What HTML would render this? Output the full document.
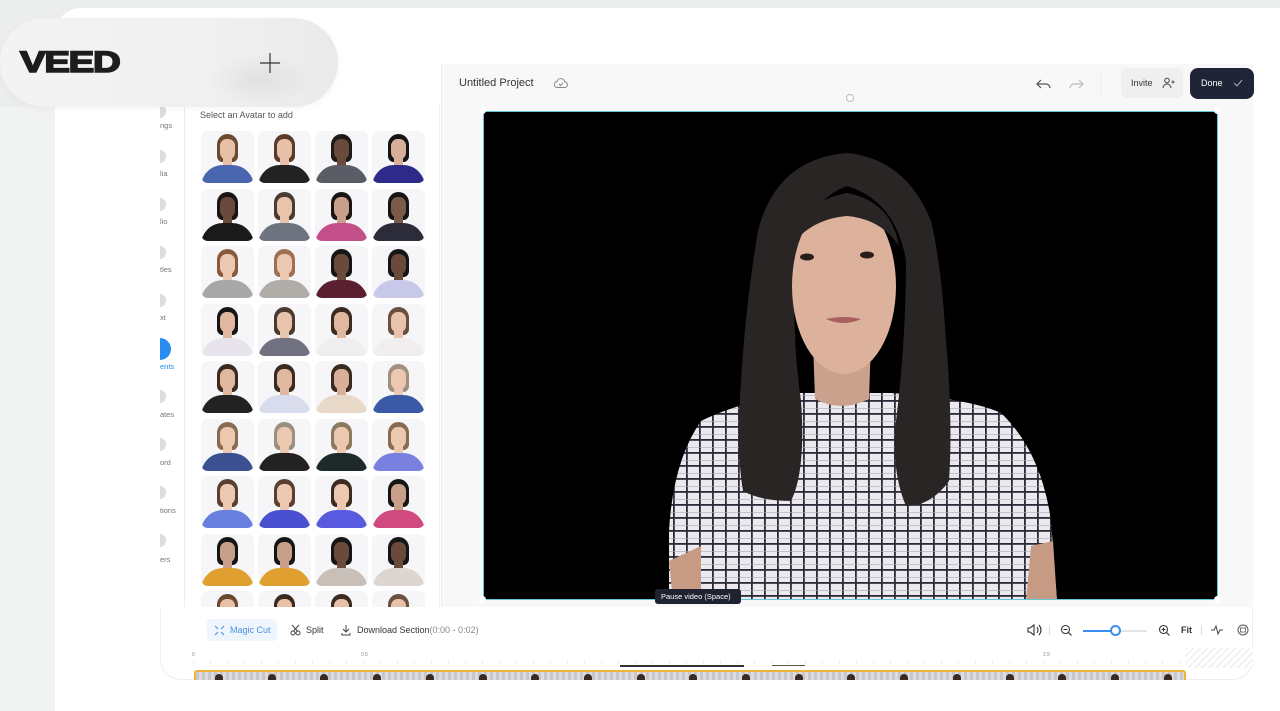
<!DOCTYPE html>
<html><head><meta charset="utf-8"><style>
*{margin:0;padding:0;box-sizing:border-box}
html,body{width:1280px;height:711px;overflow:hidden}
body{background:#eceeed;font-family:"Liberation Sans",sans-serif;position:relative}
.abs{position:absolute}
.card{left:55px;top:8px;width:1225px;height:703px;background:#fff;border-top-left-radius:26px}
.pill{left:0;top:18px;width:338px;height:89px;border-radius:45px;background:linear-gradient(90deg,#f3f3f3,#f0f0f0 60%,#eaeaea);box-shadow:0 2px 8px rgba(0,0,0,.04)}
.logo{left:20px;top:46px;font-size:30px;font-weight:900;letter-spacing:-1px;color:#1c1c1c;transform:scaleX(1.28);transform-origin:left;-webkit-text-stroke:1.6px #1c1c1c;font-family:"Liberation Sans",sans-serif}
.nav{left:160px;top:105px;width:25px;height:502px;overflow:hidden;border-right:1px solid #ececec}
.nav span{position:absolute;font-size:7.5px;color:#777;left:0}
.nav b{position:absolute;left:0;width:6px;height:13px;background:#ddd;border-radius:0 6px 6px 0}
.av{position:absolute;width:53px;height:52px;border-radius:7px;background:#f6f6f8;overflow:hidden}
.av .b{position:absolute;left:0;right:0;bottom:-12px;height:30px;border-radius:22px 22px 0 0;background:var(--s)}
.av .h{position:absolute;left:16px;top:3px;width:21px;height:var(--hl,28px);border-radius:11px 11px 6px 6px;background:var(--h)}
.av .f{position:absolute;left:19px;top:8px;width:15px;height:21px;border-radius:8px 8px 9px 9px;background:var(--k)}
.av .n{position:absolute;left:22px;top:26px;width:9px;height:8px;background:var(--k)}
.ed{left:441px;top:64px;width:812px;height:543px;background:#f8f8f8}
.video{left:483px;top:111px;width:735px;height:489px;background:#000;border:1px solid #5fc9d6;overflow:hidden}
.tb{left:160px;top:607px;width:1093px;height:73px;background:#fff;border-radius:0 0 20px 20px;border:1px solid #eee;border-top:none}
.t{position:absolute;font-size:9px;color:#333;white-space:nowrap}
</style></head><body>
<div class="abs card"></div>
<div class="abs ed"></div>
<div class="abs" style="left:441px;top:64px;width:1px;height:543px;background:#eee"></div>
<div class="abs" style="left:459px;top:77px;font-size:11px;color:#333">Untitled Project</div>
<svg class="abs" style="left:554px;top:77px" width="14" height="12" viewBox="0 0 14 12"><path d="M3.5 10.5h7a2.8 2.8 0 0 0 .3-5.6A4 4 0 0 0 3 4.5a3 3 0 0 0 .5 6z M5 7l1.5 1.5L9 6" fill="none" stroke="#888" stroke-width="1"/></svg>
<svg class="abs" style="left:1035px;top:77px" width="50" height="14" viewBox="0 0 50 14"><path d="M6 3L2 7l4 4M2 7h9a4 4 0 0 1 4 4" fill="none" stroke="#555" stroke-width="1.2"/><path d="M44 3l4 4-4 4M48 7h-9a4 4 0 0 0-4 4" fill="none" stroke="#bbb" stroke-width="1.2"/></svg>
<div class="abs" style="left:1100px;top:70px;width:1px;height:26px;background:#eee"></div>
<div class="abs" style="left:1121px;top:68px;width:62px;height:30px;background:#efefef;border-radius:6px"></div>
<div class="abs" style="left:1131px;top:78px;font-size:9px;color:#333">Invite</div>
<svg class="abs" style="left:1162px;top:77px" width="13" height="12" viewBox="0 0 13 12"><circle cx="5" cy="3.5" r="2.3" fill="none" stroke="#444" stroke-width="1"/><path d="M1 11a4 4 0 0 1 8 0" fill="none" stroke="#444" stroke-width="1"/><path d="M9.5 5h3M11 3.5v3" stroke="#444" stroke-width="1"/></svg>
<div class="abs" style="left:1190px;top:68px;width:64px;height:31px;background:#1f2437;border-radius:8px"></div>
<div class="abs" style="left:1201px;top:78px;font-size:9px;color:#fff">Done</div>
<svg class="abs" style="left:1233px;top:79px" width="10" height="8"><path d="M1 4l3 3 5-6" fill="none" stroke="#aab" stroke-width="1"/></svg>
<div class="abs" style="left:846px;top:94px;width:8px;height:8px;border-radius:50%;border:1px solid #bbb;background:#fff"></div>

<div class="abs video">
<svg width="735" height="489" viewBox="483 111 735 489" style="display:block">
<defs><pattern id="chk" width="13" height="13" patternUnits="userSpaceOnUse"><rect width="13" height="13" fill="#ebe9ee"/><rect x="0" y="9" width="13" height="1.8" fill="#2a2a38"/><rect x="9" y="0" width="1.8" height="13" fill="#2a2a38"/><rect x="0" y="4" width="13" height="0.6" fill="#aaa8b4"/></pattern></defs>
<path d="M668 600 L668 530 Q672 460 700 420 Q740 400 800 392 L890 392 Q970 398 1000 412 Q1040 450 1050 520 L1056 600Z" fill="url(#chk)"/>
<path d="M668 560 L672 600 L700 600 L700 545 Z" fill="#c79a84"/>
<path d="M1030 545 L1025 600 L1056 600 L1052 540Z" fill="#c79a84"/>
<path d="M812 340 L814 398 Q840 412 868 398 L870 340Z" fill="#c9a18c"/>
<path d="M846 152 Q775 158 757 230 Q745 300 740 380 Q735 450 742 490 Q760 500 790 500 Q805 470 800 400 Q790 330 795 260 Q805 200 846 185 Q895 200 905 260 Q905 340 895 420 Q890 470 905 505 Q930 505 948 480 Q952 420 945 340 Q940 260 930 220 Q905 158 846 152Z" fill="#2a2525"/>
<ellipse cx="843" cy="285" rx="52" ry="88" fill="#dcb29c"/>
<path d="M790 245 Q800 200 846 192 Q890 200 898 245 Q880 218 846 215 Q810 218 790 245Z" fill="#2a2525"/>
<ellipse cx="806" cy="256" rx="7" ry="3.5" fill="#2a1e1a"/><ellipse cx="866" cy="254" rx="7" ry="3.5" fill="#2a1e1a"/>
<path d="M825 318 Q843 326 860 318 Q843 314 825 318Z" fill="#a86060"/>
</svg>
</div>
<div class="abs" style="left:479px;top:107px;width:7px;height:7px;border-radius:50%;background:#fff"></div>
<div class="abs" style="left:1214px;top:107px;width:7px;height:7px;border-radius:50%;background:#fff"></div>
<div class="abs" style="left:479px;top:596px;width:7px;height:7px;border-radius:50%;background:#fff"></div>
<div class="abs" style="left:1214px;top:596px;width:7px;height:7px;border-radius:50%;background:#fff"></div>
<div class="abs" style="left:655px;top:589px;width:86px;height:15px;background:#1f2230;border-radius:3px;color:#fff;font-size:7.5px;padding:3px 0 0 6px">Pause video (Space)</div>

<div class="abs nav">
<b style="top:0"></b><span style="top:16px">ngs</span>
<b style="top:45px"></b><span style="top:64px">lia</span>
<b style="top:93px"></b><span style="top:112px">lio</span>
<b style="top:141px"></b><span style="top:160px">tles</span>
<b style="top:189px"></b><span style="top:208px">xt</span>
<b style="top:233px;background:#2a8cf0;width:11px;height:22px;border-radius:0 11px 11px 0"></b><span style="top:257px;color:#2a8cf0">ents</span>
<b style="top:285px"></b><span style="top:305px">ates</span>
<b style="top:333px"></b><span style="top:353px">ord</span>
<b style="top:381px"></b><span style="top:401px">tions</span>
<b style="top:429px"></b><span style="top:450px">ers</span>
</div>

<div class="abs" style="left:185px;top:105px;width:255px;height:502px;border-right:1px solid #eee"></div>
<div class="t abs" style="left:200px;top:110px;color:#555;font-size:9px">Select an Avatar to add</div>
<div class="abs" id="grid" style="left:185px;top:105px;width:255px;height:502px;overflow:hidden"></div>

<div class="abs tb"></div>
<div class="abs" style="left:207px;top:619px;width:70px;height:22px;background:#eef5fd;border-radius:4px"></div>
<svg class="abs" style="left:214px;top:625px" width="11" height="11"><path d="M1 1l3 3M10 1L7 4M1 10l3-3M10 10L7 7" stroke="#4a90e2" stroke-width="1"/></svg>
<div class="t" style="left:230px;top:625px;color:#4a90e2">Magic Cut</div>
<svg class="abs" style="left:290px;top:624px" width="11" height="12"><circle cx="3" cy="9" r="2" fill="none" stroke="#444"/><circle cx="8" cy="9" r="2" fill="none" stroke="#444"/><path d="M3.5 7L9 1M7.5 7L2 1" stroke="#444"/></svg>
<div class="t" style="left:306px;top:625px">Split</div>
<svg class="abs" style="left:341px;top:624px" width="10" height="12"><path d="M5 1v7M2 5l3 3 3-3M1 9v2h8V9" fill="none" stroke="#444"/></svg>
<div class="t" style="left:357px;top:625px">Download Section<span style="color:#888">(0:00 - 0:02)</span></div>
<svg class="abs" style="left:1026px;top:623px" width="16" height="14"><path d="M2 5h2l4-3v10L4 9H2z M11 4q2 3 0 6 M13 2q4 5 0 10" fill="none" stroke="#333" stroke-width="1.1"/></svg>
<div class="abs" style="left:1049px;top:625px;width:1px;height:10px;background:#ddd"></div>
<svg class="abs" style="left:1060px;top:624px" width="13" height="13"><circle cx="5.5" cy="5.5" r="4" fill="none" stroke="#333" stroke-width="1.1"/><path d="M3.5 5.5h4M8.5 8.5l3 3" stroke="#333" stroke-width="1.1"/></svg>
<div class="abs" style="left:1083px;top:630px;width:32px;height:2px;background:#3a8ef0"></div>
<div class="abs" style="left:1115px;top:630px;width:32px;height:2px;background:#e5e5e5"></div>
<div class="abs" style="left:1110px;top:625px;width:11px;height:11px;border-radius:50%;border:2px solid #3a8ef0;background:#fff"></div>
<svg class="abs" style="left:1158px;top:624px" width="13" height="13"><circle cx="5.5" cy="5.5" r="4" fill="none" stroke="#333" stroke-width="1.1"/><path d="M3.5 5.5h4M5.5 3.5v4M8.5 8.5l3 3" stroke="#333" stroke-width="1.1"/></svg>
<div class="t" style="left:1181px;top:625px;font-weight:bold">Fit</div>
<div class="abs" style="left:1201px;top:625px;width:1px;height:10px;background:#ddd"></div>
<svg class="abs" style="left:1211px;top:624px" width="12" height="12"><path d="M0 6h3l2-4 2 8 2-4h3" fill="none" stroke="#444"/></svg>
<svg class="abs" style="left:1237px;top:624px" width="12" height="12"><circle cx="6" cy="6" r="5" fill="none" stroke="#555"/><rect x="3.5" y="4" width="5" height="4" fill="none" stroke="#555" stroke-width=".8"/></svg>
<div class="t" style="left:192px;top:652px;font-size:5px;color:#888">0</div>
<div class="t" style="left:361px;top:652px;font-size:5px;color:#888">0.5</div>
<div class="t" style="left:1043px;top:652px;font-size:5px;color:#888">2.5</div>
<div class="t" style="left:1216px;top:652px;font-size:5px;color:#888">3</div>
<div class="abs" style="left:193px;top:662px;width:1045px;height:1px;background:repeating-linear-gradient(90deg,#ccc 0 1px,transparent 1px 17px)"></div>
<div class="abs" style="left:1185px;top:648px;width:68px;height:20px;background:repeating-linear-gradient(135deg,#f2f2f2 0 2px,#fff 2px 5px)"></div>
<div class="abs" style="left:620px;top:665px;width:124px;height:2px;background:#333"></div>
<div class="abs" style="left:772px;top:665px;width:33px;height:1px;background:#555"></div>
<div class="abs" style="left:194px;top:670px;width:992px;height:12px;border:2px solid #f0b23a;border-bottom:none;border-radius:3px 3px 0 0;background:repeating-linear-gradient(90deg,#c8c8cc 0 3px,#dcdce0 3px 6px)" id="strip"></div>
<div class="abs" style="left:55px;top:680px;width:1225px;height:31px;background:#fff"></div>
<div class="abs" style="left:0;top:107px;width:55px;height:604px;background:#f1f2f2"></div>

<div class="abs pill"></div>
<div class="abs" style="left:210px;top:55px;width:100px;height:50px;border-radius:50%;background:radial-gradient(ellipse,rgba(200,200,200,.35),transparent 70%)"></div>
<div class="abs logo">VEED</div>
<svg class="abs" style="left:260px;top:53px" width="20" height="20"><path d="M10 0v20M0 10h20" stroke="#333" stroke-width="1.2"/></svg>

<script>
var rows=[
[["#4b66b0","#6b4a30","#e8c0a8"],["#222","#5a3a28","#e8c0a8"],["#5a5c66","#1e1a18","#6a4a3a"],["#2e2a8a","#151515","#d8b09a"]],
[["#1a1a1a","#1a1414","#6a4a3a"],["#6e7380","#4a3a30","#e8c4ac"],["#c4508a","#1a1414","#c8a08a"],["#2b2b3a","#151515","#7a5a48"]],
[["#a7a7a7","#8a5a3a","#ecc8b0"],["#b0aca8","#a07050","#ecc8b0"],["#5a2030","#151515","#6a4a3a"],["#c8c8e8","#151515","#6a4a3a"]],
[["#e8e4ec","#151515","#e0b8a0"],["#707080","#4a3a30","#e8c4ac"],["#eee","#3a2a20","#e0b8a0"],["#f0eeee","#6a5040","#e8c4ac"]],
[["#222","#3a2a20","#e0b8a0"],["#d8dcec","#3a2a20","#e0b8a0"],["#e8d8c8","#3a2a20","#d8b09a"],["#3a5aa8","#a09080","#ecc8b0"]],
[["#3a5090","#8a6a50","#ecc8b0"],["#222","#9a9080","#ecc8b0"],["#1e2a2a","#8a7a60","#ecc8b0"],["#7a80e0","#8a6a50","#ecc8b0"]],
[["#6a80e0","#5a4030","#ecc8b0"],["#4a50d0","#5a4030","#ecc8b0"],["#5a5ae0","#3a2a20","#ecc8b0"],["#d04a80","#151515","#c8a08a"]],
[["#e0a030","#151515","#c8a08a"],["#e0a030","#151515","#c8a08a"],["#c8c0b8","#151515","#6a4a3a"],["#ddd6d0","#151515","#6a4a3a"]],
[["#888","#6a4a30","#e8c0a8"],["#888","#3a2a20","#e8c0a8"],["#888","#3a2a20","#e8c0a8"],["#888","#6a5040","#e8c0a8"]]];
var h="";rows.forEach(function(r,ri){r.forEach(function(c,ci){
h+='<div class="av" style="left:'+(16+ci*57)+'px;top:'+(26+ri*57.5)+'px;--s:'+c[0]+';--h:'+c[1]+';--k:'+c[2]+'"><i class="h"></i><i class="b"></i><i class="n"></i><i class="f"></i></div>';});});
document.getElementById("grid").innerHTML=h;
var s="";for(var i=0;i<19;i++){s+='<div style="position:absolute;left:'+(19+i*52.7)+'px;top:2px;width:8px;height:9px;border-radius:4px 4px 0 0;background:#3a2a22"></div>';}
document.getElementById("strip").innerHTML=s;
</script>
</body></html>
